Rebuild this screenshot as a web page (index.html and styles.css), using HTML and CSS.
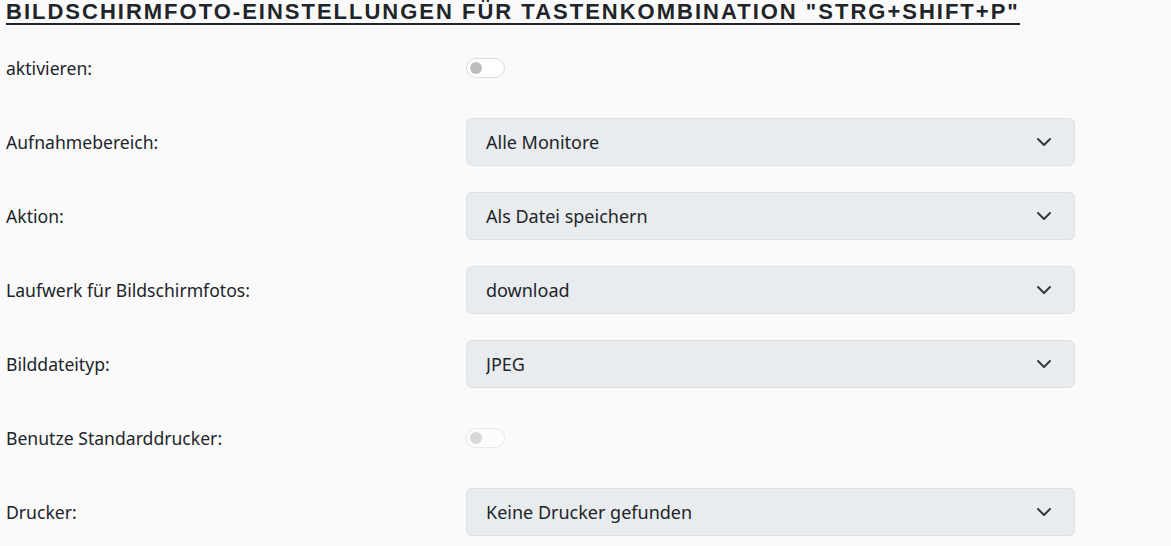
FILE: index.html
```html
<!DOCTYPE html>
<html lang="de">
<head>
    <meta charset="UTF-8">
    <meta name="viewport" content="width=device-width, initial-scale=1.0">
    <title>Bildschirmfoto-Einstellungen</title>
    <link rel="stylesheet" href="styles.css">
</head>
<body>

    <div class="settings">
        <h2 class="settings-title">Bildschirmfoto-Einstellungen für Tastenkombination "Strg+Shift+P"</h2>

        <!-- aktivieren -->
        <div class="setting-row">
            <label class="setting-label" for="enable">aktivieren:</label>
            <div class="setting-control">
                <label class="toggle">
                    <input type="checkbox" id="enable">
                    <span class="toggle-track"></span>
                </label>
            </div>
        </div>

        <!-- Aufnahmebereich -->
        <div class="setting-row">
            <label class="setting-label" for="area">Aufnahmebereich:</label>
            <div class="setting-control">
                <div class="select-box">
                    <select id="area">
                        <option>Alle Monitore</option>
                    </select>
                    <svg class="chevron" viewBox="0 0 16 16" width="16" height="16"><path d="M2 5l6 6 6-6" fill="none" stroke="currentColor" stroke-width="2" stroke-linecap="round" stroke-linejoin="round"/></svg>
                </div>
            </div>
        </div>

        <!-- Aktion -->
        <div class="setting-row">
            <label class="setting-label" for="action">Aktion:</label>
            <div class="setting-control">
                <div class="select-box">
                    <select id="action">
                        <option>Als Datei speichern</option>
                    </select>
                    <svg class="chevron" viewBox="0 0 16 16" width="16" height="16"><path d="M2 5l6 6 6-6" fill="none" stroke="currentColor" stroke-width="2" stroke-linecap="round" stroke-linejoin="round"/></svg>
                </div>
            </div>
        </div>

        <!-- Laufwerk -->
        <div class="setting-row">
            <label class="setting-label" for="drive">Laufwerk für Bildschirmfotos:</label>
            <div class="setting-control">
                <div class="select-box">
                    <select id="drive">
                        <option>download</option>
                    </select>
                    <svg class="chevron" viewBox="0 0 16 16" width="16" height="16"><path d="M2 5l6 6 6-6" fill="none" stroke="currentColor" stroke-width="2" stroke-linecap="round" stroke-linejoin="round"/></svg>
                </div>
            </div>
        </div>

        <!-- Bilddateityp -->
        <div class="setting-row">
            <label class="setting-label" for="filetype">Bilddateityp:</label>
            <div class="setting-control">
                <div class="select-box">
                    <select id="filetype">
                        <option>JPEG</option>
                    </select>
                    <svg class="chevron" viewBox="0 0 16 16" width="16" height="16"><path d="M2 5l6 6 6-6" fill="none" stroke="currentColor" stroke-width="2" stroke-linecap="round" stroke-linejoin="round"/></svg>
                </div>
            </div>
        </div>

        <!-- Standarddrucker -->
        <div class="setting-row">
            <label class="setting-label" for="default-printer">Benutze Standarddrucker:</label>
            <div class="setting-control">
                <label class="toggle toggle-disabled">
                    <input type="checkbox" id="default-printer" disabled>
                    <span class="toggle-track"></span>
                </label>
            </div>
        </div>

        <!-- Drucker -->
        <div class="setting-row">
            <label class="setting-label" for="printer">Drucker:</label>
            <div class="setting-control">
                <div class="select-box">
                    <select id="printer">
                        <option>Keine Drucker gefunden</option>
                    </select>
                    <svg class="chevron" viewBox="0 0 16 16" width="16" height="16"><path d="M2 5l6 6 6-6" fill="none" stroke="currentColor" stroke-width="2" stroke-linecap="round" stroke-linejoin="round"/></svg>
                </div>
            </div>
        </div>
    </div>

</body>
</html>
```

FILE: styles.css
```css
/* General Body Styles */
body {
    font-family: 'Noto Sans', 'Open Sans', sans-serif;
    background-color: #fafafa;
    color: #212529;
    margin: 0;
    padding: 0 6px;
}

/* Title */
.settings {
    width: 1069px;
}

.settings-title {
    display: inline-block;
    font-family: 'Liberation Sans', Arial, sans-serif;
    font-size: 22px;
    font-weight: bold;
    text-transform: uppercase;
    letter-spacing: 2px;
    color: #212529;
    margin: 0 0 6px 0;
    padding-top: 1px;
    line-height: 22px;
    border-bottom: 2px solid #212529;
}

/* Rows */
.setting-row {
    display: flex;
    align-items: center;
    height: 74px;
}

.setting-label {
    width: 460px;
    flex-shrink: 0;
    font-size: 17.6px;
}

.setting-control {
    flex: 1;
}

/* Select */
.select-box {
    position: relative;
}

.select-box select {
    width: 100%;
    height: 48px;
    appearance: none;
    background-color: #e9ecef;
    border: 1px solid #dee2e6;
    border-radius: 6px;
    padding: 0 48px 0 19px;
    font-family: inherit;
    font-size: 18px;
    color: #212529;
}

.chevron {
    position: absolute;
    right: 23px;
    top: 16px;
    color: #343a40;
    pointer-events: none;
}

/* Toggle */
.toggle {
    display: inline-block;
    position: relative;
    width: 39px;
    height: 20px;
    margin-top: 4px;
}

.toggle input {
    display: none;
}

.toggle-track {
    position: absolute;
    inset: 0;
    background-color: #fff;
    border: 1px solid #dcdcdc;
    border-radius: 10px;
    box-sizing: border-box;
}

.toggle-track::before {
    content: "";
    position: absolute;
    left: 3px;
    top: 3px;
    width: 12px;
    height: 12px;
    border-radius: 50%;
    background-color: #bdbdbd;
}

.toggle-disabled {
    opacity: 0.55;
}
```
